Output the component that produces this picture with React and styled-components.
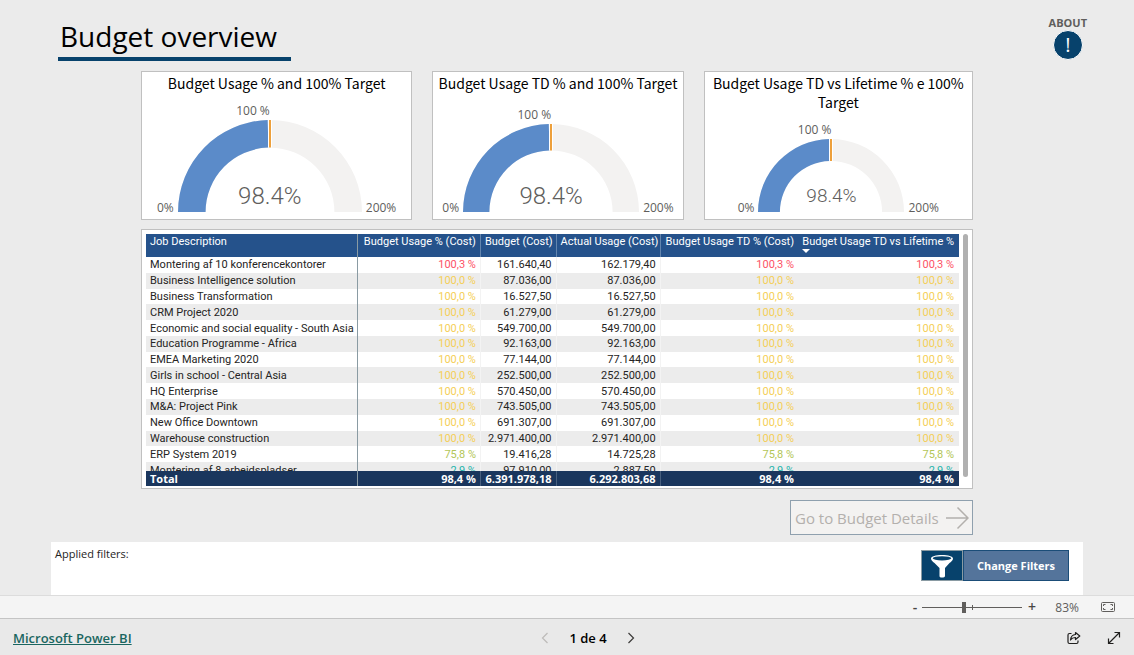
import React, { useState } from 'react'
import styled, { createGlobalStyle } from 'styled-components';

const gauges = [
    { title: 'Budget Usage % and 100% Target', value: 98.4, radius: 92, valueSize: 24 },
    { title: 'Budget Usage TD % and 100% Target', value: 98.4, radius: 88, valueSize: 24 },
    { title: 'Budget Usage TD vs Lifetime % e 100% Target', value: 98.4, radius: 73, valueSize: 19 },
];

const jobs = [
    { name: 'Montering af 10 konferencekontorer', usage: '100,3 %', budget: '161.640,40', actual: '162.179,40', level: 'over' },
    { name: 'Business Intelligence solution', usage: '100,0 %', budget: '87.036,00', actual: '87.036,00', level: 'full' },
    { name: 'Business Transformation', usage: '100,0 %', budget: '16.527,50', actual: '16.527,50', level: 'full' },
    { name: 'CRM Project 2020', usage: '100,0 %', budget: '61.279,00', actual: '61.279,00', level: 'full' },
    { name: 'Economic and social equality - South Asia', usage: '100,0 %', budget: '549.700,00', actual: '549.700,00', level: 'full' },
    { name: 'Education Programme - Africa', usage: '100,0 %', budget: '92.163,00', actual: '92.163,00', level: 'full' },
    { name: 'EMEA Marketing 2020', usage: '100,0 %', budget: '77.144,00', actual: '77.144,00', level: 'full' },
    { name: 'Girls in school - Central Asia', usage: '100,0 %', budget: '252.500,00', actual: '252.500,00', level: 'full' },
    { name: 'HQ Enterprise', usage: '100,0 %', budget: '570.450,00', actual: '570.450,00', level: 'full' },
    { name: 'M&A: Project Pink', usage: '100,0 %', budget: '743.505,00', actual: '743.505,00', level: 'full' },
    { name: 'New Office Downtown', usage: '100,0 %', budget: '691.307,00', actual: '691.307,00', level: 'full' },
    { name: 'Warehouse construction', usage: '100,0 %', budget: '2.971.400,00', actual: '2.971.400,00', level: 'full' },
    { name: 'ERP System 2019', usage: '75,8 %', budget: '19.416,28', actual: '14.725,28', level: 'mid' },
    { name: 'Montering af 8 arbejdspladser', usage: '2,9 %', budget: '97.910,00', actual: '2.887,50', level: 'low' },
];

const levelColors = {
    over: '#fd5165',
    full: '#f5cf57',
    mid: '#b3c657',
    low: '#1fb5ac',
};

//Path of a half ring between two fractions (0 = left end, 1 = right end)
const ringPath = (radius, from, to) => {
    const inner = radius * 0.7;
    const point = (r, t) => {
        const angle = Math.PI * (1 - t);
        return `${(radius + r * Math.cos(angle)).toFixed(2)} ${(radius - r * Math.sin(angle)).toFixed(2)}`;
    };
    return `M${point(radius, from)} A${radius} ${radius} 0 0 1 ${point(radius, to)} L${point(inner, to)} A${inner} ${inner} 0 0 0 ${point(inner, from)} Z`;
};

const Gauge = ({ title, value, radius, valueSize }) => (
    <Card>
        <CardTitle>{title}</CardTitle>
        <GaugeRow>
            <Limit>0%</Limit>
            <Dial>
                <TargetLabel>100 %</TargetLabel>
                <svg width={radius * 2} height={radius} viewBox={`0 0 ${radius * 2} ${radius}`}>
                    <path d={ringPath(radius, 0, 1)} fill="#f3f2f1" />
                    <path d={ringPath(radius, 0, value / 200)} fill="#5b8bc9" />
                    <path d={`M${radius} 0V${radius * 0.3}`} stroke="#fff" strokeWidth="4" />
                    <path d={`M${radius} 0V${radius * 0.3}`} stroke="#eda03c" strokeWidth="2" />
                </svg>
                <DialValue $size={valueSize}>{value}%</DialValue>
            </Dial>
            <Limit>200%</Limit>
        </GaugeRow>
    </Card>
);

const App = () => {
    const [zoom, setZoom] = useState(83);

    return (
        <Page>
            <GlobalStyle />
            <Report>
                <Header>
                    <Title>Budget overview</Title>
                    <About>
                        ABOUT
                        <AboutButton aria-label="About">!</AboutButton>
                    </About>
                </Header>
                <Content>
                    <Cards>
                        {gauges.map((gauge) => <Gauge key={gauge.title} {...gauge} />)}
                    </Cards>
                    <TablePanel>
                        <TableScroll>
                            <Table>
                                <colgroup>
                                    <col style={{ width: '26.1%' }} />
                                    <col style={{ width: '15.1%' }} />
                                    <col style={{ width: '9.3%' }} />
                                    <col style={{ width: '12.8%' }} />
                                    <col style={{ width: '16.9%' }} />
                                    <col />
                                </colgroup>
                                <thead>
                                    <tr>
                                        <th>Job Description</th>
                                        <th>Budget Usage % (Cost)</th>
                                        <th>Budget (Cost)</th>
                                        <th>Actual Usage (Cost)</th>
                                        <th>Budget Usage TD % (Cost)</th>
                                        <th>Budget Usage TD vs Lifetime %<SortArrow /></th>
                                    </tr>
                                </thead>
                                <tbody>
                                    {jobs.map((job) => (
                                        <tr key={job.name}>
                                            <td>{job.name}</td>
                                            <Usage $level={job.level}>{job.usage}</Usage>
                                            <td>{job.budget}</td>
                                            <td>{job.actual}</td>
                                            <Usage $level={job.level}>{job.usage}</Usage>
                                            <Usage $level={job.level}>{job.usage}</Usage>
                                        </tr>
                                    ))}
                                </tbody>
                                <tfoot>
                                    <tr>
                                        <td>Total</td>
                                        <td>98,4 %</td>
                                        <td>6.391.978,18</td>
                                        <td>6.292.803,68</td>
                                        <td>98,4 %</td>
                                        <td>98,4 %</td>
                                    </tr>
                                </tfoot>
                            </Table>
                        </TableScroll>
                        <ScrollThumb />
                    </TablePanel>
                    <DetailsButton>
                        Go to Budget Details
                        <svg width="24" height="24" viewBox="0 0 24 24" fill="none" stroke="#b3b0ad" strokeWidth="1.5">
                            <path d="M1 12H23M12.500 1.500L23 12L12.500 22.500" />
                        </svg>
                    </DetailsButton>
                </Content>
                <Filters>
                    <span>Applied filters:</span>
                    <FilterActions>
                        <FunnelButton aria-label="Filters">
                            <svg width="24" height="24" viewBox="0 0 24 24">
                                <path d="M1 4.500C1 2.500 6 1 12 1S23 2.500 23 4.500C23 6 21.500 7.500 19.500 9L15 14V22C15 23 13.500 23.500 12 23.500S9.500 23 9.500 22V14L4.500 9C2.500 7.500 1 6 1 4.500Z" fill="#fff" />
                                <ellipse cx="12" cy="4.300" rx="9.300" ry="2.100" fill="#07426c" />
                            </svg>
                        </FunnelButton>
                        <ChangeButton>Change Filters</ChangeButton>
                    </FilterActions>
                </Filters>
            </Report>
            <StatusBar>
                <ZoomStep aria-label="Zoom out" onClick={() => setZoom(Math.max(0, zoom - 10))}>-</ZoomStep>
                <ZoomSlider
                    type="range"
                    aria-label="Zoom"
                    min="0"
                    max="200"
                    value={zoom}
                    onChange={(e) => setZoom(Number(e.target.value))}
                />
                <ZoomStep aria-label="Zoom in" onClick={() => setZoom(Math.min(200, zoom + 10))}>+</ZoomStep>
                <ZoomValue>{zoom}%</ZoomValue>
                <IconButton aria-label="Fit to page">
                    <svg width="14" height="10" viewBox="0 0 14 10" fill="none" stroke="#605e5c">
                        <rect x="0.500" y="0.500" width="13" height="9" rx="1" />
                        <path d="M4.500 2.500H2.500V4M2.500 6V7.500H4.500M9.500 2.500H11.500V4M11.500 6V7.500H9.500" />
                    </svg>
                </IconButton>
            </StatusBar>
            <Footer>
                <BrandLink href="#">Microsoft Power BI</BrandLink>
                <Pager>
                    <IconButton aria-label="Previous page" disabled>
                        <svg width="8" height="12" viewBox="0 0 8 12" fill="none" stroke="#bdbbb9" strokeWidth="1.200">
                            <path d="M6.500 1L1.500 6L6.500 11" />
                        </svg>
                    </IconButton>
                    <span>1 de 4</span>
                    <IconButton aria-label="Next page">
                        <svg width="8" height="12" viewBox="0 0 8 12" fill="none" stroke="#3b3a39" strokeWidth="1.200">
                            <path d="M1.500 1L6.500 6L1.500 11" />
                        </svg>
                    </IconButton>
                </Pager>
                <FooterActions>
                    <IconButton aria-label="Share">
                        <svg width="14" height="14" viewBox="0 0 14 14" fill="none" stroke="#201f1e" strokeWidth="1.200" strokeLinejoin="round">
                            <path d="M4.500 2.500H2.500C1.500 2.500 1 3 1 4V11C1 12 1.500 12.500 2.500 12.500H9.500C10.500 12.500 11 12 11 11V9.500" />
                            <path d="M8.500 1.500L12.800 5L8.500 8.500V6.500C6.300 6.400 4.800 7.200 3.500 9C3.800 5.800 5.500 3.700 8.500 3.500Z" />
                        </svg>
                    </IconButton>
                    <IconButton aria-label="Full screen">
                        <svg width="14" height="14" viewBox="0 0 14 14" fill="none" stroke="#201f1e" strokeWidth="1.200">
                            <path d="M1.500 12.500L12.500 1.500M7.500 1.500H12.500V6.500M1.500 7.500V12.500H6.500" />
                        </svg>
                    </IconButton>
                </FooterActions>
            </Footer>
        </Page>
    )
}

export default App;

const GlobalStyle = createGlobalStyle`
    * {
        box-sizing: border-box;
    }

    body {
        margin: 0;
        font-family: 'Open Sans', 'Noto Sans', sans-serif;
        background-color: #ebebeb;
    }

    button {
        font-family: inherit;
        cursor: pointer;
    }
`;

const Page = styled.div`
    min-height: 100vh;
    display: flex;
    flex-direction: column;
`;

const Report = styled.main`
    flex: 1;
    display: flex;
    flex-direction: column;
`;

//Header components
const Header = styled.header`
    display: flex;
    justify-content: space-between;
    align-items: flex-start;
    padding: 16px 47px 10px 58px;
`;

const Title = styled.h1`
    margin: 0;
    padding: 0 14px 0 2px;
    border-bottom: 4px solid #07426c;
    font-size: 28px;
    font-weight: 400;
    line-height: 41px;
    color: #000;
`;

const About = styled.div`
    display: flex;
    flex-direction: column;
    align-items: center;
    font-size: 11px;
    font-weight: 700;
    line-height: 14px;
    color: #605e5c;
`;

const AboutButton = styled.button`
    width: 30px;
    height: 30px;
    padding: 0;
    border: 1px solid #fff;
    border-radius: 50%;
    background-color: #07426c;
    color: white;
    font-size: 20px;
    line-height: 26px;
`;

const Content = styled.div`
    display: flex;
    flex-direction: column;
    padding: 0 161px 0 141px;
`;

//Gauge components
const Cards = styled.div`
    display: grid;
    grid-template-columns: 272fr 252fr 270fr;
    gap: 20px;
`;

const Card = styled.section`
    height: 149px;
    display: flex;
    flex-direction: column;
    justify-content: space-between;
    padding: 2px 4px 7px;
    border: 1px solid #c0c0c0;
    background-color: white;
`;

const CardTitle = styled.h2`
    margin: 0;
    font-family: 'Noto Sans CJK SC', 'Open Sans', sans-serif;
    font-size: 14px;
    font-weight: 400;
    line-height: 19px;
    text-align: center;
    color: #000;
`;

const GaugeRow = styled.div`
    display: flex;
    justify-content: center;
    align-items: flex-end;
    gap: 4px;
`;

const Limit = styled.span`
    font-size: 12px;
    line-height: 8px;
    color: #605e5c;
`;

const Dial = styled.div`
    position: relative;

    svg{
        display: block;
    }
`;

const TargetLabel = styled.div`
    padding-right: 50%;
    font-size: 12px;
    line-height: 18px;
    text-align: right;
    color: #605e5c;
`;

const DialValue = styled.div`
    position: absolute;
    left: 0;
    right: 0;
    bottom: 0;
    font-family: Roboto, sans-serif;
    font-size: ${({ $size }) => $size}px;
    font-weight: 300;
    line-height: 32px;
    text-align: center;
    color: #605e5c;
`;

//Table components
const TablePanel = styled.section`
    display: flex;
    gap: 4px;
    margin-top: 9px;
    padding: 4px 4px 2px;
    border: 1px solid #c0c0c0;
    background-color: white;
`;

const TableScroll = styled.div`
    flex: 1;
    height: 252px;
    overflow: hidden;
`;

const Table = styled.table`
    width: 100%;
    height: 259px;
    table-layout: fixed;
    border-spacing: 0;
    font-family: Roboto, 'Open Sans', sans-serif;
    font-size: 11px;
    line-height: 15px;
    color: #252423;
    white-space: nowrap;

    th, td{
        padding: 0 4px;
        text-align: right;
        border-right: 1px solid #f3f3f3;
    }

    th:first-child, td:first-child{
        text-align: left;
        border-right-color: #8a9ba3;
    }

    th:nth-child(n+5), td:nth-child(n+5){
        border-right: none;
    }

    th:last-child, td:last-child{
        padding-right: 5px;
    }

    th{
        position: sticky;
        top: 0;
        z-index: 1;
        height: 23px;
        vertical-align: top;
        font-weight: 400;
        background-color: #25528b;
        border-right-color: #6385ae;
        color: white;
    }

    tbody tr:nth-child(even){
        background-color: #ececec;
    }

    tfoot td{
        position: sticky;
        bottom: 0;
        height: 15px;
        background-color: #1a365d;
        border-right-color: #48607f;
        color: white;
        font-family: 'Open Sans', sans-serif;
        font-weight: 700;
    }
`;

const Usage = styled.td`
    color: ${({ $level }) => levelColors[$level]};
`;

const SortArrow = styled.i`
    display: block;
    width: 8px;
    border: 4px solid transparent;
    border-top-color: white;
    border-bottom: none;
`;

const ScrollThumb = styled.div`
    width: 5px;
    height: 243px;
    border-radius: 3px;
    background-color: #b0b0b0;
`;

const DetailsButton = styled.button`
    align-self: flex-end;
    display: flex;
    align-items: center;
    justify-content: space-between;
    width: 183px;
    height: 35px;
    margin-top: 11px;
    padding: 0 3px 0 4px;
    border: 1px solid #8fa0ae;
    background-color: #f3f2f1;
    font-size: 15px;
    color: #b3b0ad;
    white-space: nowrap;
`;

//Filter components
const Filters = styled.section`
    flex: 1;
    display: flex;
    justify-content: space-between;
    align-items: flex-start;
    margin: 7px 51px 0;
    padding: 4px 14px 4px 4px;
    background-color: white;
    font-size: 11px;
    line-height: 16px;
    color: #252423;
`;

const FilterActions = styled.div`
    display: flex;
    padding-top: 4px;
`;

const FunnelButton = styled.button`
    display: flex;
    align-items: center;
    justify-content: center;
    width: 42px;
    height: 31px;
    padding: 0;
    border: 1px solid #8a9ba3;
    background-color: #07426c;
`;

const ChangeButton = styled.button`
    width: 106px;
    height: 31px;
    padding: 0;
    border: 1px solid #1b4d78;
    background-color: #54749b;
    font-size: 11px;
    font-weight: 700;
    color: white;
`;

//Status bar components
const StatusBar = styled.div`
    display: flex;
    justify-content: flex-end;
    align-items: center;
    height: 23px;
    padding-right: 19px;
    border-top: 1px solid #dcdcdc;
    background-color: #f4f4f4;
    color: #605e5c;
`;

const ZoomStep = styled.button`
    width: 14px;
    padding: 0;
    border: none;
    background: none;
    font-size: 14px;
    font-weight: 600;
    line-height: 20px;
    color: #484644;
`;

const ZoomSlider = styled.input`
    appearance: none;
    width: 100px;
    height: 11px;
    margin: 0 3px 0 0;
    background:
        linear-gradient(#605e5c, #605e5c) center / 1px 5px no-repeat,
        linear-gradient(#605e5c, #605e5c) center / 100% 1px no-repeat;

    &::-webkit-slider-thumb{
        appearance: none;
        width: 4px;
        height: 11px;
        background-color: #605e5c;
    }
`;

const ZoomValue = styled.span`
    width: 40px;
    margin-right: 22px;
    font-size: 12px;
    text-align: right;
`;

const IconButton = styled.button`
    display: flex;
    padding: 0;
    border: none;
    background: none;
`;

//Footer components
const Footer = styled.footer`
    display: grid;
    grid-template-columns: 1fr auto 1fr;
    align-items: center;
    height: 37px;
    padding: 2px 13px 0;
    border-top: 1px solid #c4c4c4;
    background-color: #e9e9e9;
`;

const BrandLink = styled.a`
    justify-self: start;
    font-size: 13px;
    font-weight: 600;
    color: #1a6660;
`;

const Pager = styled.nav`
    display: flex;
    align-items: center;
    gap: 20px;
    padding-left: 42px;
    font-size: 13px;
    font-weight: 600;
    color: #000;
`;

const FooterActions = styled.div`
    display: flex;
    justify-content: flex-end;
    gap: 26px;
`;
